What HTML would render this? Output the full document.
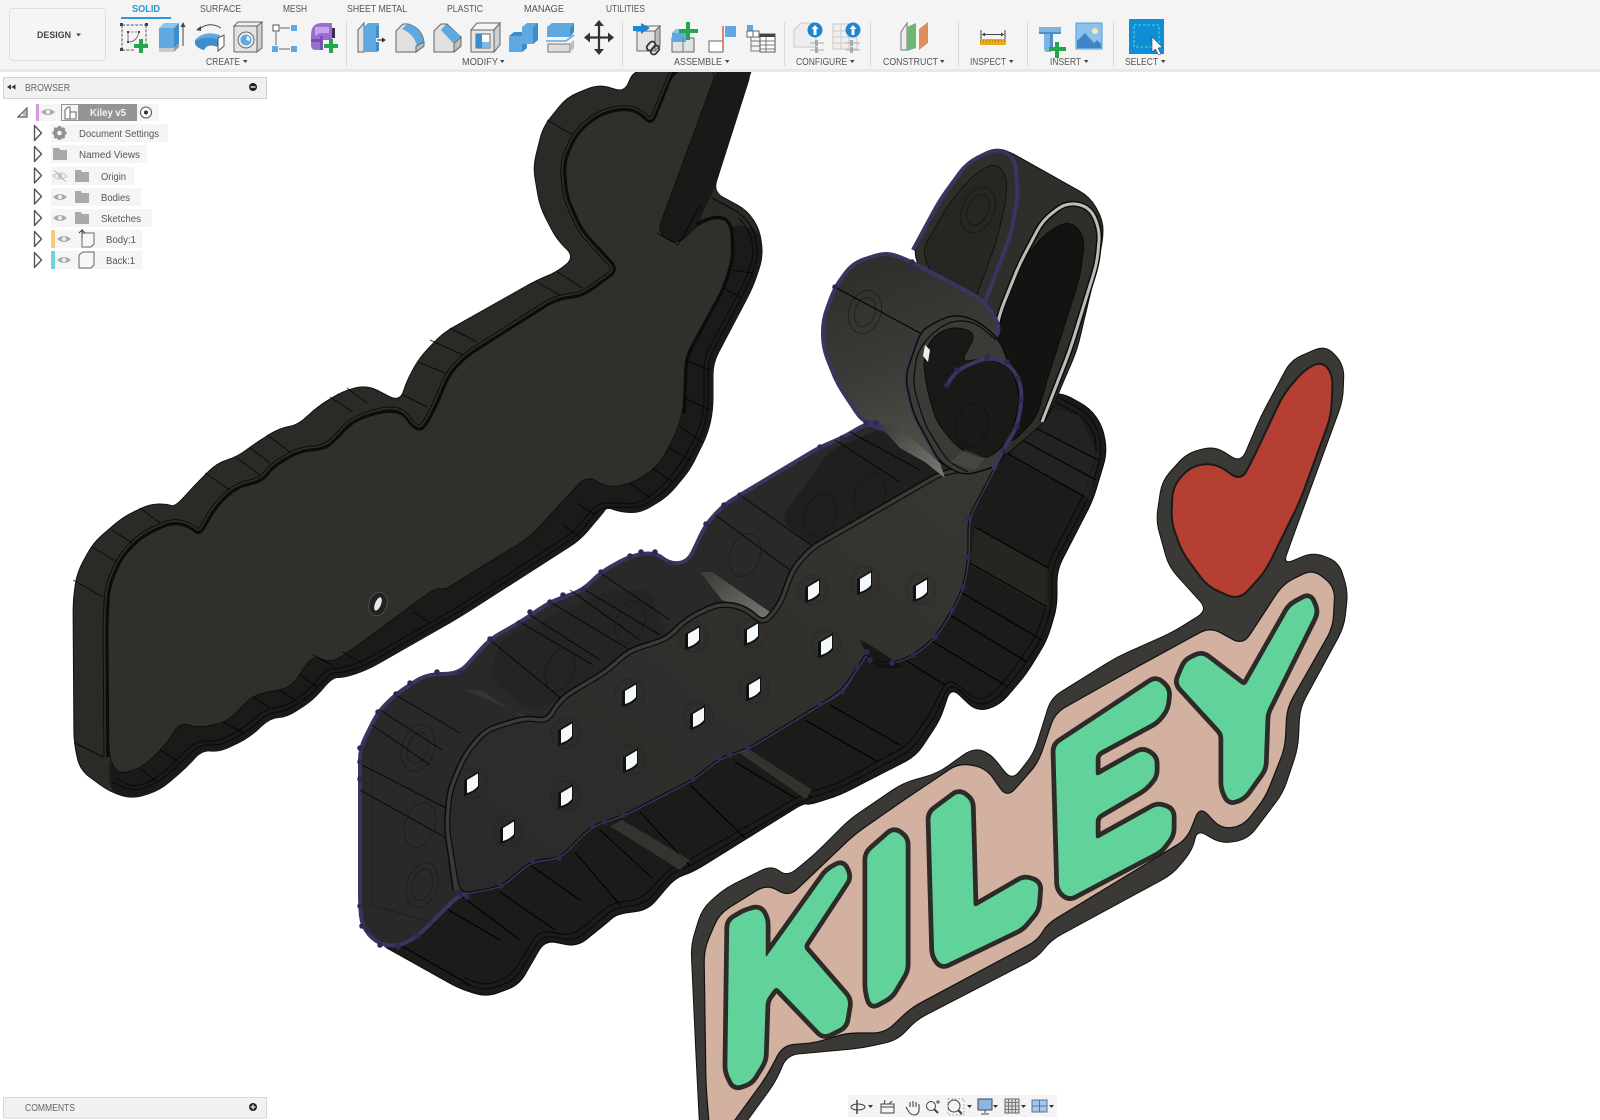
<!DOCTYPE html>
<html><head><meta charset="utf-8"><title>Fusion</title>
<style>
html,body{margin:0;padding:0;background:#fff;width:1600px;height:1120px;overflow:hidden}
svg{display:block;filter:blur(.35px)}
text{font-family:"Liberation Sans",sans-serif}
</style></head><body>
<svg xmlns="http://www.w3.org/2000/svg" width="1600" height="1120" viewBox="0 0 1600 1120">
<defs>
<linearGradient id="gw" x1="0" y1="0" x2="0.3" y2="1"><stop offset="0" stop-color="#2c2c29"/><stop offset=".6" stop-color="#3a3a36"/><stop offset="1" stop-color="#4d4d48"/></linearGradient>
<linearGradient id="gl" x1="0" y1="0" x2="1" y2="1"><stop offset="0" stop-color="#3a3a36"/><stop offset="1" stop-color="#7d7d78"/></linearGradient>
<linearGradient id="gf" x1="0" y1="1" x2="1" y2="0"><stop offset="0" stop-color="#2a2a29"/><stop offset=".6" stop-color="#31302d"/><stop offset="1" stop-color="#383732"/></linearGradient>
<g id="h"><circle cx="0" cy="0" r="15" fill="none" stroke="#111" stroke-opacity=".35" stroke-width=".8"/><circle cx="0" cy="0" r="12" fill="none" stroke="#111" stroke-opacity=".25" stroke-width=".7" stroke-dasharray="2 1"/><path d="M-8,-3 L7,-12 L7,5 Q3,10 -8,13Z" fill="#111"/><path d="M-5,-3 L6,-9.5 L6,3 Q2,8 -5,10Z" fill="#f4f9fb"/></g>
<g id="ge"><path d="M-7,0 Q0,-6 7,0 Q0,6 -7,0Z" fill="#a8a8a8"/><circle r="2.2" fill="#eee"/></g>
<g id="gt"><path d="M-3.5,-7.5 L3.5,0 L-3.5,7.5Z" fill="#fff" stroke="#555" stroke-width="1.4" stroke-linejoin="round"/></g>
<g id="gfo"><path d="M0,1 H6 L7,3 H14 V13 H0Z" fill="#a9a9a9"/></g>
</defs>

<!-- LEFT PIECE -->
<path class="s" fill="#2b2a27" stroke="#111" stroke-width="1" stroke-linejoin="round" d="M73,600 L77,573 L93,543 L123,517 L150,504 L167,504 L175,507 L193,487 L217,463 L237,457 L257,442 L280,428 L298,425 L317,407 L343,391 L367,385 L400,402 L407,380 L420,357 L443,333 L537,280 L557,272 L575,257 L557,240 L540,207 L533,167 L543,127 L567,97 L600,84 L625,93 L633,70 L752,70 L713,192 L747,210 L760,230 L763,257 L753,287 L713,363 L713,410 L708,433 L690,470 L667,497 L640,513 L620,512 L607,507 L603,513 L580,540 L460,617 L367,670 L343,678 L333,677 L313,700 L287,717 L270,718 L250,737 L220,752 L202,750 L187,767 L160,790 L133,799 L110,792 L80,770 L74,743Z"/>
<path class="s" fill="#1b1a18" stroke-linejoin="round" d="M109,757 L118,775 L143,767 L167,743 L180,722 L198,728 L227,722 L253,695 L290,688 L313,655 L330,663 L347,653 L437,587 L445,590 L460,580 L530,537 L587,475 L608,488 L633,483 L657,467 L673,440 L683,413 L685,357 L723,287 L732,257 L730,223 L760,230 L763,257 L753,287 L713,363 L713,410 L708,433 L690,470 L667,497 L640,513 L620,512 L607,507 L603,513 L580,540 L460,617 L367,670 L343,678 L333,677 L313,700 L287,717 L270,718 L250,737 L220,752 L202,750 L187,767 L160,790 L133,799 L110,792Z"/>
<path fill="#1a1917" d="M657,233 L717,70 L752,70 L713,192 L697,225 L678,245Z"/>
<path class="s" fill="none" stroke="#0b0b0b" stroke-width="1.2" d="M112,782 L133,792 L158,783 L183,761 L200,744 L220,746 L248,731 L268,713 L287,711 L311,695 L331,672 L343,673 L366,665 L460,611 L578,535 L600,507 L620,507 L640,508 L664,492 L686,466 L703,432 L708,410 L708,360 L748,285 L758,257 L755,232 L742,214 L712,198"/>
<path class="s" fill="none" stroke="#0b0b0b" stroke-width="1.2" d="M116,778 L133,788 L156,779 L180,757 L197,740 L218,742 L245,727 L265,709 L284,707 L308,691 L328,668 L341,669 L363,661 L458,607 L575,531 L597,503 L618,503 L638,504 L661,488 L682,462 L699,430 L704,408 L704,358 L744,283 L754,256 L751,234 L739,218"/>
<g fill="none" stroke-linejoin="round">
<path class="s" stroke="#0c0c0c" stroke-width="11" d="M109,757 L108,623 L110,587 L123,557 L143,537 L173,523 L190,528 L200,537 L217,507 L237,488 L263,482 L273,468 L300,452 L325,450 L337,440 L353,422 L383,412 L400,412 L412,428 L423,432 L437,407 L450,375 L467,357 L557,300 L583,297 L620,270 L583,230 L568,197 L565,163 L577,135 L597,117 L620,110 L637,112 L652,127 L675,72"/>
<path class="s" stroke="#2e2d2a" stroke-width="9" d="M109,757 L108,623 L110,587 L123,557 L143,537 L173,523 L190,528 L200,537 L217,507 L237,488 L263,482 L273,468 L300,452 L325,450 L337,440 L353,422 L383,412 L400,412 L412,428 L423,432 L437,407 L450,375 L467,357 L557,300 L583,297 L620,270 L583,230 L568,197 L565,163 L577,135 L597,117 L620,110 L637,112 L652,127 L675,72"/>
<path class="s" stroke="#0c0c0c" stroke-width="5.5" d="M109,757 L108,623 L110,587 L123,557 L143,537 L173,523 L190,528 L200,537 L217,507 L237,488 L263,482 L273,468 L300,452 L325,450 L337,440 L353,422 L383,412 L400,412 L412,428 L423,432 L437,407 L450,375 L467,357 L557,300 L583,297 L620,270 L583,230 L568,197 L565,163 L577,135 L597,117 L620,110 L637,112 L652,127 L675,72"/>
<path class="s" stroke="#0c0c0c" stroke-width="6" d="M683,413 L685,357 L723,287 L732,257 L730,223 L717,217 L697,225"/>
</g>
<path class="s" fill="#302f2b" stroke="#0c0c0c" stroke-width=".8" stroke-linejoin="round" d="M109,757 L118,775 L143,767 L167,743 L180,722 L198,728 L227,722 L253,695 L290,688 L313,655 L330,663 L347,653 L437,587 L445,590 L460,580 L530,537 L587,475 L608,488 L633,483 L657,467 L673,440 L683,413 L685,357 L723,287 L732,257 L730,223 L717,217 L697,225 L678,245 L657,233 L717,70 L675,70 L652,127 L637,112 L620,110 L597,117 L577,135 L565,163 L568,197 L583,230 L620,270 L583,297 L557,300 L467,357 L450,375 L437,407 L423,432 L412,428 L402,413 L383,412 L353,422 L337,440 L325,450 L300,452 L273,468 L263,482 L237,488 L217,507 L200,537 L190,528 L173,523 L143,537 L123,557 L110,587 L108,623Z"/>
<path fill="none" stroke="#000" stroke-opacity=".75" stroke-width="1" d="M73,580L103,597M75,743L103,757M92,547L117,562M112,530L132,543M140,508L160,523M205,473L230,490M237,458L260,475M250,448L270,463M267,435L290,452M330,397L353,412M347,388L367,403M140,768L157,782M160,750L180,763M223,722L243,733M253,697L270,708M280,690L298,702M300,675L317,687M313,655L332,665M343,652L362,663M413,612L430,623M450,328L477,342M430,340L463,355M418,362L445,373M403,395L427,407M537,282L560,295M557,272L583,288M547,120L573,135M732,270L752,273M723,288L742,298M685,360L710,370M685,398L710,410M680,427L702,442M668,447L690,460M652,468L673,482M630,483L650,498M577,503L595,515M563,525L580,537M678,245L657,233M700,205L678,245"/>
<ellipse cx="378" cy="604" rx="9" ry="12" transform="rotate(18 378 604)" fill="#222"/><ellipse cx="378" cy="604" rx="9" ry="12" transform="rotate(18 378 604)" fill="none" stroke="#555" stroke-width=".8"/>
<ellipse cx="378" cy="604" rx="3" ry="7" transform="rotate(22 378 604)" fill="#e8e8e8"/>

<!-- MIDDLE: REAR TRAY -->
<path class="s" fill="#1c1b19" stroke="#0a0a0a" stroke-width="1" stroke-linejoin="round" d="M1000,405 L1060,392 L1090,408 L1103,427 L1107,453 L1093,500 L1057,570 L1057,607 L1047,640 L1027,673 L1000,705 L977,712 L951,687 L940,720 L916,756 L840,795 L809,805 L804,803 L693,872 L675,878 L648,910 L617,914 L608,922 L577,947 L545,940 L519,985 L487,997 L460,989 L378,943 L440,800 L800,600Z"/>
<path class="s" fill="none" stroke="#0b0b0b" stroke-width="1.2" d="M1060,398 L1086,412 L1098,429 L1102,453 L1088,498 L1052,568 L1052,606 L1042,637 L1022,669 L996,700 L977,706 L950,682 L935,716 L912,750 L838,789 L806,799 L690,866 L672,873 L645,904 L615,908 L605,916 L575,941 L542,935 L515,980 L486,991 L462,983"/>
<path class="s" fill="none" stroke="#0b0b0b" stroke-width="1.2" d="M1057,403 L1082,416 L1094,431 L1097,453 L1083,496 L1047,566 L1047,605 L1037,634 L1017,665 L992,695 L977,701 L948,677 L931,712 L908,745 L836,784 L803,794 L687,861 L669,869 L642,899 L613,903 L602,911 L573,936 L539,930 L512,975 L486,986 L464,978"/>
<path fill="#2a2a27" fill-opacity=".7" d="M975,527 L1048,568 L1048,610 L970,565Z"/>
<path fill="#2a2a27" fill-opacity=".5" d="M1010,455 L1090,500 L1098,455 L1080,415 L1040,405Z"/>
<path fill="none" stroke="#000" stroke-width="1.1" d="M975,527L1048,568M970,563L1047,607M962,593L1042,640M950,615L1027,662M930,640L1005,685M905,660L945,685M1005,452L1085,497M1022,440L1096,480M1030,425L1098,460M830,705L900,745M805,720L878,762M750,752L812,798M735,762L795,798M690,785L745,838M640,812L690,866M600,830L652,878M575,852L620,905M530,865L580,900M500,892L555,930M440,905L500,940M460,895L520,940M400,945L470,985"/>
<path fill="#3a3a36" fill-opacity=".8" d="M738,752 L750,750 L812,790 L806,799Z"/>
<path fill="#3a3a36" fill-opacity=".8" d="M610,826 L622,820 L690,860 L680,870Z"/>

<!-- HANDLE -->
<path class="s" fill="#2e2e2a" stroke="#0d0d0d" stroke-width="1" stroke-linejoin="round" d="M913,250 L940,200 L967,163 L997,148 L1010,152 L1090,197 L1103,220 L1103,240 L1077,350 L1047,420 L1020,443 L1000,460 L960,400 L930,300Z"/>
<path class="s" fill="#262623" stroke="#0d0d0d" stroke-width=".8" d="M922,250 L948,205 L972,176 L995,162 L1007,176 L1006,200 L997,240 L975,300 L960,350 L945,310Z"/>
<path class="s" fill="#141312" stroke="#0a0a0a" stroke-width="1" d="M1070,220 L1085,237 L1080,277 L1047,380 L1037,417 L1010,445 L990,420 L980,345 L1000,316 L1020,263 L1047,232Z"/>
<path class="s" fill="none" stroke="#0c0c0c" stroke-width="6" stroke-linejoin="round" d="M997,326 L1001,310 L1020,263 L1043,220 L1067,202 L1090,207 L1100,230 L1097,263 L1070,350 L1042,422"/>
<path class="s" fill="none" stroke="#bdbdb8" stroke-width="3" stroke-linejoin="round" d="M997,326 L1001,310 L1020,263 L1043,220 L1067,202 L1090,207 L1100,230 L1097,263 L1070,350 L1042,422"/>
<ellipse cx="978" cy="210" rx="16" ry="24" transform="rotate(24 978 210)" fill="none" stroke="#0c0c0c" stroke-opacity=".45"/>
<ellipse cx="978" cy="210" rx="10" ry="16" transform="rotate(24 978 210)" fill="none" stroke="#0c0c0c" stroke-opacity=".45"/>
<path class="s" fill="none" stroke="#3a3560" stroke-width="4" stroke-linejoin="round" d="M913,250 L940,200 L967,163 L997,148 L1015,158 L1018,197 L1010,237 L983,307 L960,363 L947,385"/>

<!-- FRONT (purple outlined shell) -->
<path class="s" fill="#282928" stroke="#3a3560" stroke-width="4" stroke-linejoin="round" d="M360,779 L360,748 L378,712 L396,694 L425,675 L460,673 L490,639 L519,623 L550,602 L583,590 L601,572 L630,556 L655,552 L670,564 L688,562 L706,524 L724,505 L740,495 L820,447 L842,438 L869,422 L900,440 L968,468 L1003,450 L993,470 L968,518 L968,557 L963,587 L952,610 L935,637 L913,655 L892,663 L870,660 L867,652 L857,667 L842,692 L820,704 L748,748 L719,758 L693,779 L623,815 L592,825 L559,858 L532,860 L501,886 L460,894 L418,936 L398,947 L376,943 L362,926 L360,906Z"/>
<!-- wall chunks -->
<path fill="#3d3d3a" fill-opacity=".6" d="M465,690 L545,724 L530,722 L480,690Z"/>
<path fill="url(#gl)" d="M700,572 L712,572 L770,612 L764,627 L742,609 L722,600Z"/>
<path class="s" fill="#1d1d1c" fill-opacity=".4" d="M500,640 L608,590 L650,590 L668,641 L630,653 L608,673 L563,700 L530,710 L490,680Z"/>
<path class="s" fill="#1b1b1a" fill-opacity=".7" d="M830,450 L882,428 L942,470 L813,548 L780,520Z"/>
<path fill="none" stroke="#000" stroke-opacity=".8" stroke-width="1" d="M372,725L430,765M380,710L442,750M396,695L460,733M362,765L450,810M360,790L450,840M490,640L563,700M520,622L593,665M530,615L600,660M550,602L630,650M570,590L640,640M585,590L660,635M600,573L670,620M715,515L790,570M740,495L815,548M835,440L900,482M850,432L920,470M876,425L950,468"/>
<path fill="none" stroke="#000" stroke-opacity=".35" stroke-width=".8" d="M372,760L372,905L440,925"/>
<!-- ghost bosses -->
<g fill="none" stroke="#0c0c0c" stroke-opacity=".45" stroke-width=".8">
<ellipse cx="418" cy="748" rx="16" ry="24" transform="rotate(18 418 748)"/><ellipse cx="418" cy="748" rx="10" ry="16" transform="rotate(18 418 748)"/>
<ellipse cx="420" cy="825" rx="15" ry="23" transform="rotate(18 420 825)"/><ellipse cx="422" cy="885" rx="15" ry="23" transform="rotate(18 422 885)"/><ellipse cx="422" cy="885" rx="10" ry="16" transform="rotate(18 422 885)"/>
<ellipse cx="560" cy="670" rx="14" ry="22" transform="rotate(18 560 670)"/><ellipse cx="630" cy="622" rx="14" ry="22" transform="rotate(18 630 622)"/>
<ellipse cx="745" cy="555" rx="15" ry="22" transform="rotate(18 745 555)"/><ellipse cx="820" cy="515" rx="15" ry="22" transform="rotate(18 820 515)"/><ellipse cx="870" cy="495" rx="15" ry="22" transform="rotate(18 870 495)"/>
</g>
<!-- face rim + face -->
<path class="s" fill="none" stroke="#0b0b0b" stroke-width="11" stroke-linejoin="round" d="M458,890 L449,827 L452,791 L467,756 L487,732 L527,720 L548,724 L563,700 L608,673 L630,653 L668,641 L688,621 L719,606 L742,609 L764,627 L782,606 L795,570 L813,550 L943,475 L969,471"/>
<path class="s" fill="none" stroke="#3a3a37" stroke-width="8" stroke-linejoin="round" d="M458,890 L449,827 L452,791 L467,756 L487,732 L527,720 L548,724 L563,700 L608,673 L630,653 L668,641 L688,621 L719,606 L742,609 L764,627 L782,606 L795,570 L813,550 L943,475 L969,471"/>
<path class="s" fill="url(#gf)" stroke="#0c0c0c" stroke-width="1.2" stroke-linejoin="round" d="M449,827 L452,791 L467,756 L487,732 L527,720 L548,724 L563,700 L608,673 L630,653 L668,641 L688,621 L719,606 L742,609 L764,627 L782,606 L795,570 L813,550 L943,475 L969,471 L1000,455 L993,470 L968,518 L968,557 L963,587 L952,610 L935,637 L913,655 L892,663 L870,660 L867,652 L857,667 L842,690 L820,704 L748,748 L719,758 L693,779 L623,815 L592,825 L559,858 L532,860 L501,886 L460,894Z"/>
<path fill="#0e0e0e" fill-opacity=".7" d="M866,653 L860,640 L870,645 L905,668 L880,668 L868,660Z"/>

<!-- HEART ON SHELL -->
<path class="s" fill="url(#gw)" stroke="#3a3560" stroke-width="4" stroke-linejoin="round" d="M877,423 L863,422 L837,383 L823,347 L823,320 L835,287 L853,263 L887,252 L912,262 L983,300 L1000,325 L996,340 L965,320 L920,333 L905,377 L913,413 L940,463 L905,445Z"/>
<path fill="url(#gl)" d="M880,426 L895,424 L940,463 L945,478 L925,462 L900,448Z"/>
<path fill="none" stroke="#000" stroke-width="1" d="M835,287L920,333"/>
<ellipse cx="865" cy="312" rx="16" ry="22" transform="rotate(18 865 312)" fill="none" stroke="#000" stroke-opacity=".45" stroke-width=".8"/>
<ellipse cx="865" cy="312" rx="10" ry="15" transform="rotate(18 865 312)" fill="none" stroke="#000" stroke-opacity=".45" stroke-width=".8"/>
<path class="s" fill="#3a3a36" stroke="#0b0b0b" stroke-width="1.5" stroke-linejoin="round" d="M920,333 L905,377 L913,413 L940,463 L965,476 L1000,465 L1022,400 L1000,340 L977,320 L953,314 L930,325Z"/>
<path class="s" fill="none" stroke="#0b0b0b" stroke-width="1.2" stroke-linejoin="round" d="M996,340 L975,322 L953,320 L933,332 L917,352 L913,385 L925,425 L948,462 L968,472"/>
<path class="s" fill="#1a1918" stroke="#0b0b0b" stroke-width="1" d="M923,357 L927,390 L937,423 L960,450 L987,460 L1010,440 L1020,400 L1013,370 L987,357 L960,363 L977,333 L953,326 L933,336Z"/>
<path fill="#eeeeee" d="M925,345 L930,350 L928,362 L923,356Z"/>
<path fill="#4a4a46" fill-opacity=".7" d="M965,450 L985,458 L975,470 L950,462Z"/>
<ellipse cx="972" cy="425" rx="16" ry="22" transform="rotate(18 972 425)" fill="none" stroke="#000" stroke-opacity=".45" stroke-width=".8"/>
<path class="s" fill="none" stroke="#3a3560" stroke-width="4" stroke-linejoin="round" d="M947,385 L957,370 L987,357 L1007,362 L1020,380 L1022,400 L1017,427 L1003,450 L993,470"/>

<!-- purple dots -->
<path fill="none" stroke="#2e2853" stroke-width="5.5" stroke-linecap="round" d="M360,779h0M360,762h0M360,748h0M378,712h0M396,694h0M410,683h0M437,672h0M460,673h0M490,639h0M519,623h0M530,612h0M550,602h0M563,595h0M583,590h0M601,572h0M630,556h0M641,552h0M655,552h0M670,564h0M706,524h0M724,505h0M740,495h0M820,447h0M842,438h0M866,423h0M876,423h0M835,287h0M912,262h0M912,270h0M957,370h0M947,385h0M987,357h0M1007,362h0M1018,378h0M1021,400h0M1017,427h0M1003,450h0M968,518h0M968,557h0M963,587h0M952,610h0M935,637h0M913,655h0M892,663h0M870,660h0M867,652h0M857,667h0M842,692h0M820,704h0M748,748h0M730,755h0M719,758h0M693,779h0M623,815h0M605,822h0M592,825h0M559,858h0M532,860h0M501,886h0M460,894h0M467,897h0M418,936h0M398,947h0M380,945h0M368,930h0M362,926h0M360,906h0"/>

<!-- holes -->
<use href="#h" x="472" y="783"/><use href="#h" x="566" y="733"/><use href="#h" x="630" y="694"/><use href="#h" x="693" y="637"/><use href="#h" x="752" y="633"/><use href="#h" x="813" y="590"/><use href="#h" x="865" y="582"/><use href="#h" x="921" y="589"/><use href="#h" x="826" y="645"/><use href="#h" x="754" y="688"/><use href="#h" x="698" y="717"/><use href="#h" x="631" y="760"/><use href="#h" x="566" y="796"/><use href="#h" x="508" y="831"/>

<!-- KILEY TAG -->
<path class="s" fill="#3a3935" stroke="#111" stroke-width="1" stroke-linejoin="round" d="M1326,345 L1344,365 L1343,400 L1290,545 L1283,565 L1313,552 L1339,562 L1348,592 L1344,627 L1300,708 L1298,748 L1283,793 L1248,839 L1221,844 L1197,829 L1193,849 L1173,874 L1051,940 L1038,957 L916,1020 L898,1040 L863,1048 L787,1055 L776,1081 L737,1135 L700,1135 L695,1035 L691,945 L702,909 L724,889 L772,865 L787,877 L815,854 L850,819 L903,783 L938,773 L973,748 L990,753 L1012,781 L1034,753 L1051,698 L1117,657 L1173,632 L1208,610 L1169,567 L1156,521 L1162,481 L1187,453 L1215,446 L1241,463 L1261,416 L1291,360Z"/>
<path class="s" fill="#d2b1a1" stroke="#111" stroke-width="1.2" stroke-linejoin="round" d="M1313,569 L1335,587 L1333,627 L1287,708 L1285,748 L1265,798 L1243,826 L1221,829 L1200,806 L1187,839 L1047,924 L1038,940 L911,1008 L885,1033 L846,1033 L815,1043 L783,1045 L767,1076 L724,1135 L710,1135 L706,1086 L704,950 L719,914 L767,884 L789,897 L855,834 L907,798 L959,763 L986,768 L1007,798 L1038,763 L1055,713 L1117,678 L1210,627 L1243,645 L1283,584Z"/>
<path class="s" fill="#b53f33" stroke="#1a1a18" stroke-width="2" stroke-linejoin="round" d="M1322,361 L1333,375 L1331,416 L1300,501 L1265,572 L1239,600 L1208,587 L1182,552 L1171,521 L1173,486 L1191,466 L1215,463 L1241,481 L1252,461 L1283,395 L1304,370Z"/>
<g stroke-linejoin="round">
<g fill="#2c2b27" stroke="#2c2b27" stroke-width="11">
<path class="l" d="M730,922 L745,913 L759,909 L765,919 L765,960 L828,872 L842,864 L848,877 L802,947 L848,1000 L844,1025 L824,1035 L776,985 L765,1000 L763,1060 L750,1081 L735,1086 L728,1071Z"/>
<path class="l" d="M868,854 L894,831 L905,839 L905,970 L890,995 L872,1005 L868,990Z"/>
<path class="l" d="M931,814 L959,793 L970,801 L973,909 L1025,879 L1038,884 L1036,909 L1021,927 L942,965 L935,955Z"/>
<path class="l" d="M1056,746 L1156,680 L1167,690 L1165,708 L1156,720 L1095,753 L1095,778 L1143,751 L1154,758 L1154,776 L1143,788 L1095,816 L1095,841 L1158,806 L1171,811 L1171,834 L1160,849 L1069,897 L1060,889Z"/>
<path class="l" d="M1178,683 L1187,662 L1202,655 L1245,688 L1291,607 L1309,597 L1315,612 L1265,713 L1263,768 L1243,796 L1230,801 L1224,788 L1224,733Z"/>
</g>
<g fill="#62d29b" stroke="#62d29b" stroke-width="1.5">
<path class="l" d="M730,922 L745,913 L759,909 L765,919 L765,960 L828,872 L842,864 L848,877 L802,947 L848,1000 L844,1025 L824,1035 L776,985 L765,1000 L763,1060 L750,1081 L735,1086 L728,1071Z"/>
<path class="l" d="M868,854 L894,831 L905,839 L905,970 L890,995 L872,1005 L868,990Z"/>
<path class="l" d="M931,814 L959,793 L970,801 L973,909 L1025,879 L1038,884 L1036,909 L1021,927 L942,965 L935,955Z"/>
<path class="l" d="M1056,746 L1156,680 L1167,690 L1165,708 L1156,720 L1095,753 L1095,778 L1143,751 L1154,758 L1154,776 L1143,788 L1095,816 L1095,841 L1158,806 L1171,811 L1171,834 L1160,849 L1069,897 L1060,889Z"/>
<path class="l" d="M1178,683 L1187,662 L1202,655 L1245,688 L1291,607 L1309,597 L1315,612 L1265,713 L1263,768 L1243,796 L1230,801 L1224,788 L1224,733Z"/>
</g>
</g>

<!-- TOOLBAR -->
<rect x="0" y="0" width="1600" height="70" fill="#f4f4f4"/>
<rect x="0" y="69" width="1600" height="3" fill="#e9e9e9"/>
<rect x="9.5" y="8.5" width="96" height="52" rx="3" fill="#f5f5f5" stroke="#dedede"/>
<text x="37" y="38" font-size="9.5" font-weight="bold" fill="#444" textLength="34" lengthAdjust="spacingAndGlyphs">DESIGN</text>
<path d="M76,33.5h5l-2.5,3z" fill="#444"/>
<g font-size="10" fill="#555">
<text x="132" y="12" fill="#2a96d0" font-weight="bold" textLength="28" lengthAdjust="spacingAndGlyphs">SOLID</text>
<text x="200" y="12" textLength="41" lengthAdjust="spacingAndGlyphs">SURFACE</text>
<text x="283" y="12" textLength="24" lengthAdjust="spacingAndGlyphs">MESH</text>
<text x="347" y="12" textLength="60" lengthAdjust="spacingAndGlyphs">SHEET METAL</text>
<text x="447" y="12" textLength="36" lengthAdjust="spacingAndGlyphs">PLASTIC</text>
<text x="524" y="12" textLength="40" lengthAdjust="spacingAndGlyphs">MANAGE</text>
<text x="606" y="12" textLength="39" lengthAdjust="spacingAndGlyphs">UTILITIES</text>
<text x="206" y="65" textLength="34" lengthAdjust="spacingAndGlyphs">CREATE</text>
<text x="462" y="65" textLength="36" lengthAdjust="spacingAndGlyphs">MODIFY</text>
<text x="674" y="65" textLength="48" lengthAdjust="spacingAndGlyphs">ASSEMBLE</text>
<text x="796" y="65" textLength="51" lengthAdjust="spacingAndGlyphs">CONFIGURE</text>
<text x="883" y="65" textLength="55" lengthAdjust="spacingAndGlyphs">CONSTRUCT</text>
<text x="970" y="65" textLength="36" lengthAdjust="spacingAndGlyphs">INSPECT</text>
<text x="1050" y="65" textLength="31" lengthAdjust="spacingAndGlyphs">INSERT</text>
<text x="1125" y="65" textLength="33" lengthAdjust="spacingAndGlyphs">SELECT</text>
</g>
<path fill="#444" d="M243,60h4.5l-2.25,3zM500,60h4.5l-2.25,3zM725,60h4.5l-2.25,3zM850,60h4.5l-2.25,3zM940,60h4.5l-2.25,3zM1009,60h4.5l-2.25,3zM1084,60h4.5l-2.25,3zM1161,60h4.5l-2.25,3z"/>
<rect x="121" y="17" width="50" height="2" fill="#2a9bd6"/>
<path stroke="#d9d9d9" stroke-width="1" d="M346.5,22V66M622.5,22V66M784.5,22V66M870.5,22V66M958.5,22V66M1027.5,22V66M1113.5,22V66"/>

<!-- create -->
<g fill="none" stroke="#555" stroke-width="1">
<path d="M122,25H146M122,25V50M146,25V44M122,50H135" stroke-dasharray="3 1.4"/>
<path d="M128,32V42Q137,42 139,32" stroke="#777"/>
<path d="M128,32H139" stroke="#777" stroke-dasharray="2 1.5"/>
</g>
<path fill="#444" d="M120,23h3v3h-3zM145,23h3v3h-3zM120,48h3v3h-3zM127,31h2v2h-2zM138,31h2v2h-2zM127,41h2v2h-2z"/>
<path fill="#22a84a" d="M139,39h4v5h5v4h-5v5h-4v-5h-5v-4h5z"/>
<path fill="#5fa9e0" d="M159,28h15v20h-15z"/>
<path fill="#8bc4ec" d="M159,28l5,-5h15l-5,5z"/>
<path fill="#3f8ccb" d="M174,28l5,-5v20l-5,5z"/>
<path fill="#c9c9c9" d="M159,48h15v4h-15z"/><path fill="#9b9b9b" d="M174,48l5,-5v4l-5,5z"/>
<path fill="none" stroke="#444" d="M183,46V26"/><path fill="#444" d="M183,22l2.5,5h-5z"/>
<path fill="none" stroke="#444" d="M199,29Q210,21 221,28"/><path fill="#444" d="M196,30l5,-4v5z"/>
<path fill="#5fa9e0" d="M195,40Q204,30 220,35L218,47Q207,43 204,50Q197,48 195,44Z"/>
<path fill="#3f8ccb" d="M195,41Q205,36 218,39L218,47Q207,43 204,50Q197,48 195,44Z"/>
<path fill="#fff" stroke="#555" d="M218,38l6,-3v11l-6,5z"/>
<rect x="234" y="26" width="23" height="26" rx="1" fill="#e3e3e3" stroke="#666"/>
<path fill="#cfcfcf" stroke="#666" d="M257,26l5,-4v26l-5,4z"/><path fill="#f0f0f0" stroke="#666" d="M234,26l4,-4h24l-5,4z"/>
<circle cx="246" cy="40" r="8" fill="#f0f0f0" stroke="#666"/><circle cx="246" cy="40" r="5.5" fill="#5fa9e0"/><path d="M247,36a4,4 0 0,1 3,5l-4,-1z" fill="#e8f2fa"/>
<rect x="273" y="25" width="6" height="6" fill="#fff" stroke="#555"/><rect x="291" y="25" width="6" height="6" fill="#5fa9e0"/><rect x="272" y="46" width="6" height="6" fill="#5fa9e0"/><rect x="291" y="46" width="6" height="6" fill="#5fa9e0"/>
<path stroke="#666" d="M280,28h10M276,32v13M279,49h11"/>
<path fill="#9a6dd0" d="M311,35Q311,23 322,23H332V40H323V50H316Q311,50 311,45Z"/><path fill="#c5a4e8" d="M315,27h14v6h-9l-5,3z"/><path fill="#7a4fb5" d="M320,36h3v14h-3zM311,39h12v3h-12z"/><path fill="#3a2e57" d="M332,28h3v10h-3z"/>
<path fill="#22a84a" d="M329,39h4v5h5v4h-5v5h-4v-5h-5v-4h5z"/>

<!-- modify -->
<path fill="#e4e4e4" stroke="#666" d="M358,30l6,-7v29h-6z"/><path fill="#5fa9e0" d="M364,27l4,-4h11v3l-3,0v26h-12z"/><path fill="#3f8ccb" d="M376,26h3v25l-3,1z"/><path fill="#fff" d="M376,38h3v4h-3z"/>
<path stroke="#333" stroke-width="1.2" d="M377,40h7"/><path fill="#333" d="M386,40l-4,-2.5v5z"/>
<path fill="#e1e1e1" stroke="#666" d="M396,52V31L403,24H408Q422,28 424,42V46L416,52Z"/><path fill="#5fa9e0" d="M407,24Q421,27 424,42L417,46Q414,34 402,29Z"/><path fill="#bdbdbd" stroke="#666" d="M416,52V46L424,42V46Z"/>
<path fill="#e1e1e1" stroke="#666" d="M434,52V31L441,24H447L461,37V46L454,52Z"/><path fill="#5fa9e0" d="M446,24L461,36L453,43L441,30Z"/><path fill="#bdbdbd" stroke="#666" d="M454,52V43L461,37V46Z"/>
<path fill="#e6e6e6" stroke="#666" d="M471,30h23v22h-23z"/><path fill="#f4f4f4" stroke="#666" d="M471,30l6,-7h23l-6,7z"/><path fill="#cfcfcf" stroke="#666" d="M494,30l6,-7v22l-6,7z"/><path fill="#fff" stroke="#666" d="M476,34h14v14h-14z"/><path fill="#3f8ccb" d="M476,34h6v14h-6z"/><path fill="#79b9e8" d="M482,42h8v6h-8z"/>
<path fill="#5fa9e0" d="M509,36h13v-9l5,-4h11v17l-5,4h-6v4l-5,4h-13z"/><path fill="#3f8ccb" d="M533,27v17l5,-4V23zM522,44v8l5,-4v-4zM509,36l5,-4h8v4z"/>
<path fill="#5fa9e0" d="M547,27l5,-4h22l-4,5v9h-23z"/><path fill="#3f8ccb" d="M570,28l4,-5v9l-4,5z"/>
<path stroke="#5fa9e0" stroke-width="1.6" d="M546,41H566l8,-6" fill="none"/>
<path fill="#dedede" stroke="#777" d="M548,44h22v8h-22z"/><path fill="#bbb" d="M570,44l4,-4v8l-4,4z"/>
<path stroke="#333" stroke-width="2.2" d="M599,24V51M586,37.5H612"/><path fill="#333" d="M599,20l5,6h-10zM599,55l5,-6h-10zM584,37.5l6,-5v10zM614,37.5l-6,-5v10z"/>

<!-- assemble -->
<path fill="#e4e4e4" stroke="#666" d="M637,31h18v20h-18z"/><path fill="#bbb" stroke="#666" d="M655,31l5,-5v20l-5,5z"/><path fill="#f4f4f4" stroke="#666" d="M637,31l5,-5h18l-5,5z"/>
<path fill="#1b87d4" d="M633,26h8v-3l9,5l-9,6v-3h-8z"/>
<g fill="none" stroke="#333" stroke-width="1.8"><rect x="648" y="41" width="6" height="10" rx="3" transform="rotate(40 651 46)"/><rect x="652" y="45" width="6" height="10" rx="3" transform="rotate(40 655 50)"/></g>
<path fill="#e2e2e2" stroke="#666" d="M672,38h22v14h-22z"/><path fill="#5fa9e0" d="M672,33l4,-4h10v13h-14z"/><path fill="#8ac2ea" d="M672,33l4,-4h10l-2,4z"/><path stroke="#777" d="M683,38v14"/>
<path fill="#22a84a" d="M686,22h4v7h8v4h-8v7h-4v-7h-7v-4h7z"/>
<rect x="709" y="41" width="14" height="11" fill="#fff" stroke="#666"/><path stroke="#d9534f" d="M723,26V50" stroke-width="1.4"/><rect x="725" y="26" width="11" height="11" fill="#5fa9e0"/>
<rect x="747" y="25" width="6" height="6" fill="#5fa9e0"/><rect x="747" y="31" width="6" height="6" fill="#fff" stroke="#666"/><rect x="753" y="31" width="6" height="6" fill="#fff" stroke="#666"/>
<path stroke="#777" fill="none" d="M751,37v14h9M751,41h9M751,46h9"/><rect x="760" y="34" width="15" height="18" fill="#fff" stroke="#555"/><path fill="#444" d="M760,34h15v3h-15z"/><path stroke="#777" d="M760,41h15M760,45h15M760,49h15M766,37v15"/>

<!-- configure -->
<path fill="#eeeeee" stroke="#c9c9c9" d="M794,30l7,-7h15v24h-22z"/><path stroke="#aaa" fill="none" d="M810,43h14M810,50h14"/><path fill="#aaa" d="M815,40h3v6h-3zM815,47h3v6h-3z"/>
<circle cx="815" cy="30" r="7.5" fill="#1d86d2"/><path fill="#fff" d="M815,25l3.5,4h-2v6h-3v-6h-2z"/>
<rect x="833" y="24" width="24" height="25" fill="#efefef" stroke="#c9c9c9"/><path stroke="#ccc" d="M833,31h24M833,37h24M833,43h24M841,24v25M849,24v25"/><path stroke="#aaa" fill="none" d="M846,43h14M846,50h14"/><path fill="#aaa" d="M850,40h3v6h-3zM850,47h3v6h-3z"/>
<circle cx="853" cy="30" r="7.5" fill="#1d86d2"/><path fill="#fff" d="M853,25l3.5,4h-2v6h-3v-6h-2z"/>

<!-- construct -->
<path fill="#efefef" stroke="#777" d="M901,32l6,-9v27h-6z"/><path fill="#6ab873" d="M907,27l9,-4v25l-9,3z"/><path fill="#dd8f5b" d="M919,29l9,-7v21l-9,7z"/>

<!-- inspect -->
<path stroke="#444" fill="none" d="M981,30v9M1005,30v9M982,34.5h22"/><path fill="#444" d="M982,34.5l3,-2v4zM1004,34.5l-3,-2v4z"/>
<rect x="980" y="39" width="26" height="6" fill="#e9a820"/><path stroke="#8d6a12" stroke-dasharray="1 2" d="M980,41h26"/>

<!-- insert -->
<path fill="#79b4e2" d="M1039,27h22v7h-8v15l-3,3h-4l-2,-2V34h-5z"/><path fill="#4a90cc" d="M1050,34h3v15l-3,3zM1039,32h22v2h-22z"/>
<path fill="#22a84a" d="M1055,42h4v5h7v4h-7v7h-4v-7h-6v-4h6z"/>
<rect x="1076" y="23" width="26" height="26" fill="#8cc2ec" stroke="#4f9dd8"/><circle cx="1095" cy="31" r="3" fill="#f7e9b0"/><path fill="#3d85c6" d="M1077,48V41l8,-8l9,10l3,-3l4,4v4z"/>

<!-- select -->
<rect x="1129" y="19" width="35" height="35" fill="#0f8ed6"/>
<rect x="1134" y="25" width="25" height="22" fill="none" stroke="#5ddad0" stroke-width="1" stroke-dasharray="2.5 2"/>
<path fill="#fff" stroke="#222" stroke-width=".5" d="M1152,37l0,15l3.5,-3l3,6l2.5,-1l-3,-6l4.5,-.5z"/>

<!-- BROWSER -->
<rect x="3.5" y="77.5" width="263" height="21" fill="#f1f1f1" stroke="#d2d2d2"/>
<path fill="#333" d="M7,87l4,-2.6v5.2zM11.5,87l4,-2.6v5.2z"/>
<text x="25" y="91" font-size="10.5" fill="#666" textLength="45" lengthAdjust="spacingAndGlyphs">BROWSER</text>
<circle cx="253" cy="87" r="4" fill="#222"/><rect x="250.5" y="86.3" width="5" height="1.4" fill="#eee"/>
<path fill="#fff" stroke="#555" stroke-width="1.2" d="M18,117L27,108V117Z"/><path fill="#888" d="M23,112l4,-4v9h-4z" opacity=".6"/>

<rect x="35" y="104" width="124" height="17" fill="#f5f5f5"/>
<rect x="36" y="104" width="3" height="17" fill="#d69ee0"/>
<use href="#ge" x="48" y="112"/>
<rect x="61" y="104" width="76" height="17" fill="#959595"/>
<rect x="62" y="105" width="16" height="15" fill="#f4f4f4"/>
<path fill="#fff" stroke="#666" d="M65,110l3,-3h2v12h-5zM70,112h6v7h-6z"/>
<text x="90" y="116" font-size="10" font-weight="bold" fill="#f4f4f4" textLength="36" lengthAdjust="spacingAndGlyphs">Kiley v5</text>
<circle cx="146" cy="112.5" r="5.5" fill="#fff" stroke="#555"/><circle cx="146" cy="112.5" r="2" fill="#333"/>

<g fill="#f5f5f5">
<rect x="51" y="124" width="117" height="18"/>
<rect x="51" y="145" width="96" height="18"/>
<rect x="51" y="167" width="83" height="18"/>
<rect x="51" y="188" width="90" height="18"/>
<rect x="51" y="209" width="101" height="18"/>
<rect x="51" y="230" width="91" height="18"/>
<rect x="51" y="251" width="91" height="18"/>
</g>
<use href="#gt" x="38" y="133"/><use href="#gt" x="38" y="154"/><use href="#gt" x="38" y="175.500"/><use href="#gt" x="38" y="196.500"/><use href="#gt" x="38" y="218"/><use href="#gt" x="38" y="239"/><use href="#gt" x="38" y="260"/>
<g transform="translate(59.500,133)"><circle r="4.600" fill="none" stroke="#909090" stroke-width="3"/><path stroke="#909090" stroke-width="2.600" d="M0,-7V7M-7,0H7M-5,-5L5,5M-5,5L5,-5"/><circle r="2.300" fill="#f5f5f5"/></g>
<use href="#gfo" x="53" y="147"/>
<use href="#gfo" x="75" y="169"/><use href="#gfo" x="75" y="190"/><use href="#gfo" x="75" y="211"/>
<g><path d="M53,176 Q60,170 67,176 Q60,182 53,176Z" fill="none" stroke="#bbb"/><circle cx="60" cy="176" r="2" fill="#bbb"/><path d="M54,170L66,182" stroke="#bbb"/></g>
<use href="#ge" x="60" y="197"/><use href="#ge" x="60" y="218"/>
<rect x="51" y="230" width="4" height="18" fill="#f6cc72"/><rect x="51" y="251" width="4" height="18" fill="#6cd5d5"/>
<use href="#ge" x="64" y="239"/><use href="#ge" x="64" y="260"/>
<path fill="#f7f7f7" stroke="#666" d="M82,233h12v11l-3,3h-9z"/><path stroke="#444" d="M82,229v9M79,233l3,-3l3,3" fill="none"/>
<path fill="#f7f7f7" stroke="#666" d="M79,255l4,-3h11v13l-3,3h-12z"/>
<g font-size="10" fill="#555">
<text x="79" y="137" textLength="80" lengthAdjust="spacingAndGlyphs">Document Settings</text>
<text x="79" y="158" textLength="61" lengthAdjust="spacingAndGlyphs">Named Views</text>
<text x="101" y="180" textLength="25" lengthAdjust="spacingAndGlyphs">Origin</text>
<text x="101" y="201" textLength="29" lengthAdjust="spacingAndGlyphs">Bodies</text>
<text x="101" y="222" textLength="40" lengthAdjust="spacingAndGlyphs">Sketches</text>
<text x="106" y="243" textLength="30" lengthAdjust="spacingAndGlyphs">Body:1</text>
<text x="106" y="264" textLength="29" lengthAdjust="spacingAndGlyphs">Back:1</text>
</g>

<!-- COMMENTS -->
<rect x="3.5" y="1097.500" width="263" height="20.500" fill="#f1f1f1" stroke="#d8d8d8"/>
<text x="25" y="1111" font-size="10.500" fill="#666" textLength="50" lengthAdjust="spacingAndGlyphs">COMMENTS</text>
<circle cx="253" cy="1107" r="4" fill="#222"/><path stroke="#eee" stroke-width="1.200" d="M250.500,1107h5M253,1104.500v5"/>

<!-- NAV BAR -->
<rect x="848" y="1095" width="209" height="22" fill="#f4f4f4"/>
<g fill="none" stroke="#444">
<path d="M857,1100V1114" stroke-width="1.500"/><ellipse cx="858" cy="1107" rx="7" ry="3"/>
<rect x="881" y="1104" width="13" height="9"/><path d="M881,1107h13M884,1104l1,-4M889,1104l3,-3"/>
<path d="M906,1107l3,5q2,3 5,3q4,0 5,-4v-7m-3,3v-5m-3,5v-6m-3,6v-5" stroke-width="1.100"/>
<circle cx="931" cy="1106" r="4.500"/><path d="M934,1109l4,4" stroke-width="2"/><path d="M938,1100v4M936,1102h4" stroke-width=".9"/>
<circle cx="954" cy="1106" r="6"/><path d="M958,1110l4,4" stroke-width="2"/><rect x="948" y="1099" width="16" height="16" stroke-dasharray="1.500 2" stroke="#999"/>
</g>
<rect x="978" y="1099" width="14" height="11" fill="#8bb6dd" stroke="#445"/><path stroke="#445" d="M985,1110v3M981,1114h8"/>
<rect x="1005" y="1099" width="14" height="14" fill="#ddd" stroke="#666"/><path stroke="#777" d="M1005,1102.500h14M1005,1106h14M1005,1109.500h14M1008.500,1099v14M1012,1099v14M1015.500,1099v14"/>
<rect x="1032" y="1100" width="15" height="12" fill="#a8c6e6" stroke="#4a76a8"/><path stroke="#4a76a8" d="M1039.500,1100v12M1032,1106h15"/>
<path fill="#333" d="M868,1105h5l-2.500,3zM967,1105h5l-2.500,3zM993,1105h5l-2.500,3zM1021,1105h5l-2.500,3zM1049,1105h5l-2.500,3z"/>
</svg>
<script>
function rnd(p,r){
var d=p.getAttribute('d'),c=/z\s*$/i.test(d),n=d.match(/-?[\d.]+/g).map(Number),a=[];
for(var i=0;i<n.length;i+=2)a.push([n[i],n[i+1]]);
var L=a.length,o='';
function cut(v,t){var dx=t[0]-v[0],dy=t[1]-v[1],l=Math.hypot(dx,dy)||1,k=Math.min(r,l/2)/l;return [(v[0]+dx*k).toFixed(1),(v[1]+dy*k).toFixed(1)];}
if(c){for(var j=0;j<L;j++){var v=a[j],pr=a[(j-1+L)%L],nx=a[(j+1)%L],s=cut(v,pr),e=cut(v,nx);o+=(j?'L':'M')+s+'Q'+v+' '+e;}o+='Z';}
else{o='M'+a[0];for(var j=1;j<L-1;j++){var v=a[j],s=cut(v,a[j-1]),e=cut(v,a[j+1]);o+='L'+s+'Q'+v+' '+e;}o+='L'+a[L-1];}
p.setAttribute('d',o);}
document.querySelectorAll('path.s').forEach(function(p){rnd(p,12)});
document.querySelectorAll('path.l').forEach(function(p){rnd(p,6)});
</script>
</body></html>
